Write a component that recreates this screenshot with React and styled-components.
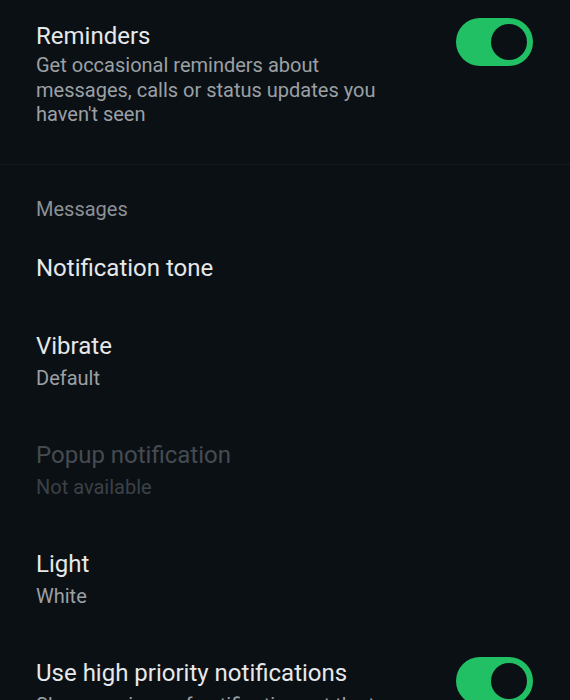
import styled, { createGlobalStyle } from "styled-components";

const GlobalStyle = createGlobalStyle`
  html, body {
    margin: 0;
    padding: 0;
    background: #0b1014;
    overflow: hidden;
  }
  body {
    font-family: Roboto, "Noto Sans", sans-serif;
  }
`;

const settings = [
  { title: "Notification tone" },
  { title: "Vibrate", sub: "Default" },
  { title: "Popup notification", sub: "Not available", disabled: true },
  { title: "Light", sub: "White" },
];

const App = () => {
  return (
    <Screen>
      <GlobalStyle />
      <Section>
        <Row $top={22} $bottom={37}>
          <Text>
            <Title>Reminders</Title>
            <Desc>
              Get occasional reminders about messages, calls or status updates
              you haven't seen
            </Desc>
          </Text>
          <Toggle $offset={-4} />
        </Row>
      </Section>
      <Divider />
      <SectionHeader>Messages</SectionHeader>
      {settings.map((item) => (
        <Row key={item.title}>
          <Text>
            <Title $disabled={item.disabled}>{item.title}</Title>
            {item.sub && (
              <Sub $disabled={item.disabled}>{item.sub}</Sub>
            )}
          </Text>
        </Row>
      ))}
      <Row>
        <Text>
          <Title>Use high priority notifications</Title>
          <Sub>Show previews of notifications at the top of the screen</Sub>
        </Text>
        <Toggle $offset={-2} />
      </Row>
    </Screen>
  );
};

const Toggle = ({ $offset }) => (
  <Switch $offset={$offset}>
    <Knob />
  </Switch>
);

export default App;

const Screen = styled.div`
  width: 570px;
  height: 700px;
  overflow: hidden;
  background: #0b1014;
`;

const Section = styled.div``;

const Row = styled.div`
  display: flex;
  align-items: flex-start;
  padding: ${(p) => p.$top ?? 25}px 37px ${(p) => p.$bottom ?? 25}px 36px;
`;

const Text = styled.div`
  flex: 1;
  min-width: 0;
`;

const Title = styled.div`
  font-size: 24px;
  line-height: 28px;
  color: ${(p) => (p.$disabled ? "#454b52" : "#e6e8ea")};
  white-space: nowrap;
`;

const Sub = styled.div`
  margin-top: 5px;
  font-size: 20px;
  line-height: 26px;
  color: ${(p) => (p.$disabled ? "#3b4147" : "#9ba0a5")};
`;

const Desc = styled.div`
  margin-top: 3px;
  max-width: 362px;
  font-size: 20px;
  line-height: 24.5px;
  color: #9ba0a5;
`;

const Switch = styled.div`
  flex: none;
  margin-top: ${(p) => p.$offset}px;
  margin-left: 40px;
  width: 77px;
  height: 48px;
  border-radius: 24px;
  background: #21c064;
  display: flex;
  align-items: center;
  justify-content: flex-end;
  padding-right: 6px;
  box-sizing: border-box;
`;

const Knob = styled.div`
  width: 36px;
  height: 36px;
  border-radius: 50%;
  background: #0b1014;
`;

const Divider = styled.div`
  height: 1px;
  background: #141a1f;
`;

const SectionHeader = styled.div`
  padding: 31px 36px 7px;
  font-size: 20px;
  line-height: 26px;
  color: #8c9196;
`;
